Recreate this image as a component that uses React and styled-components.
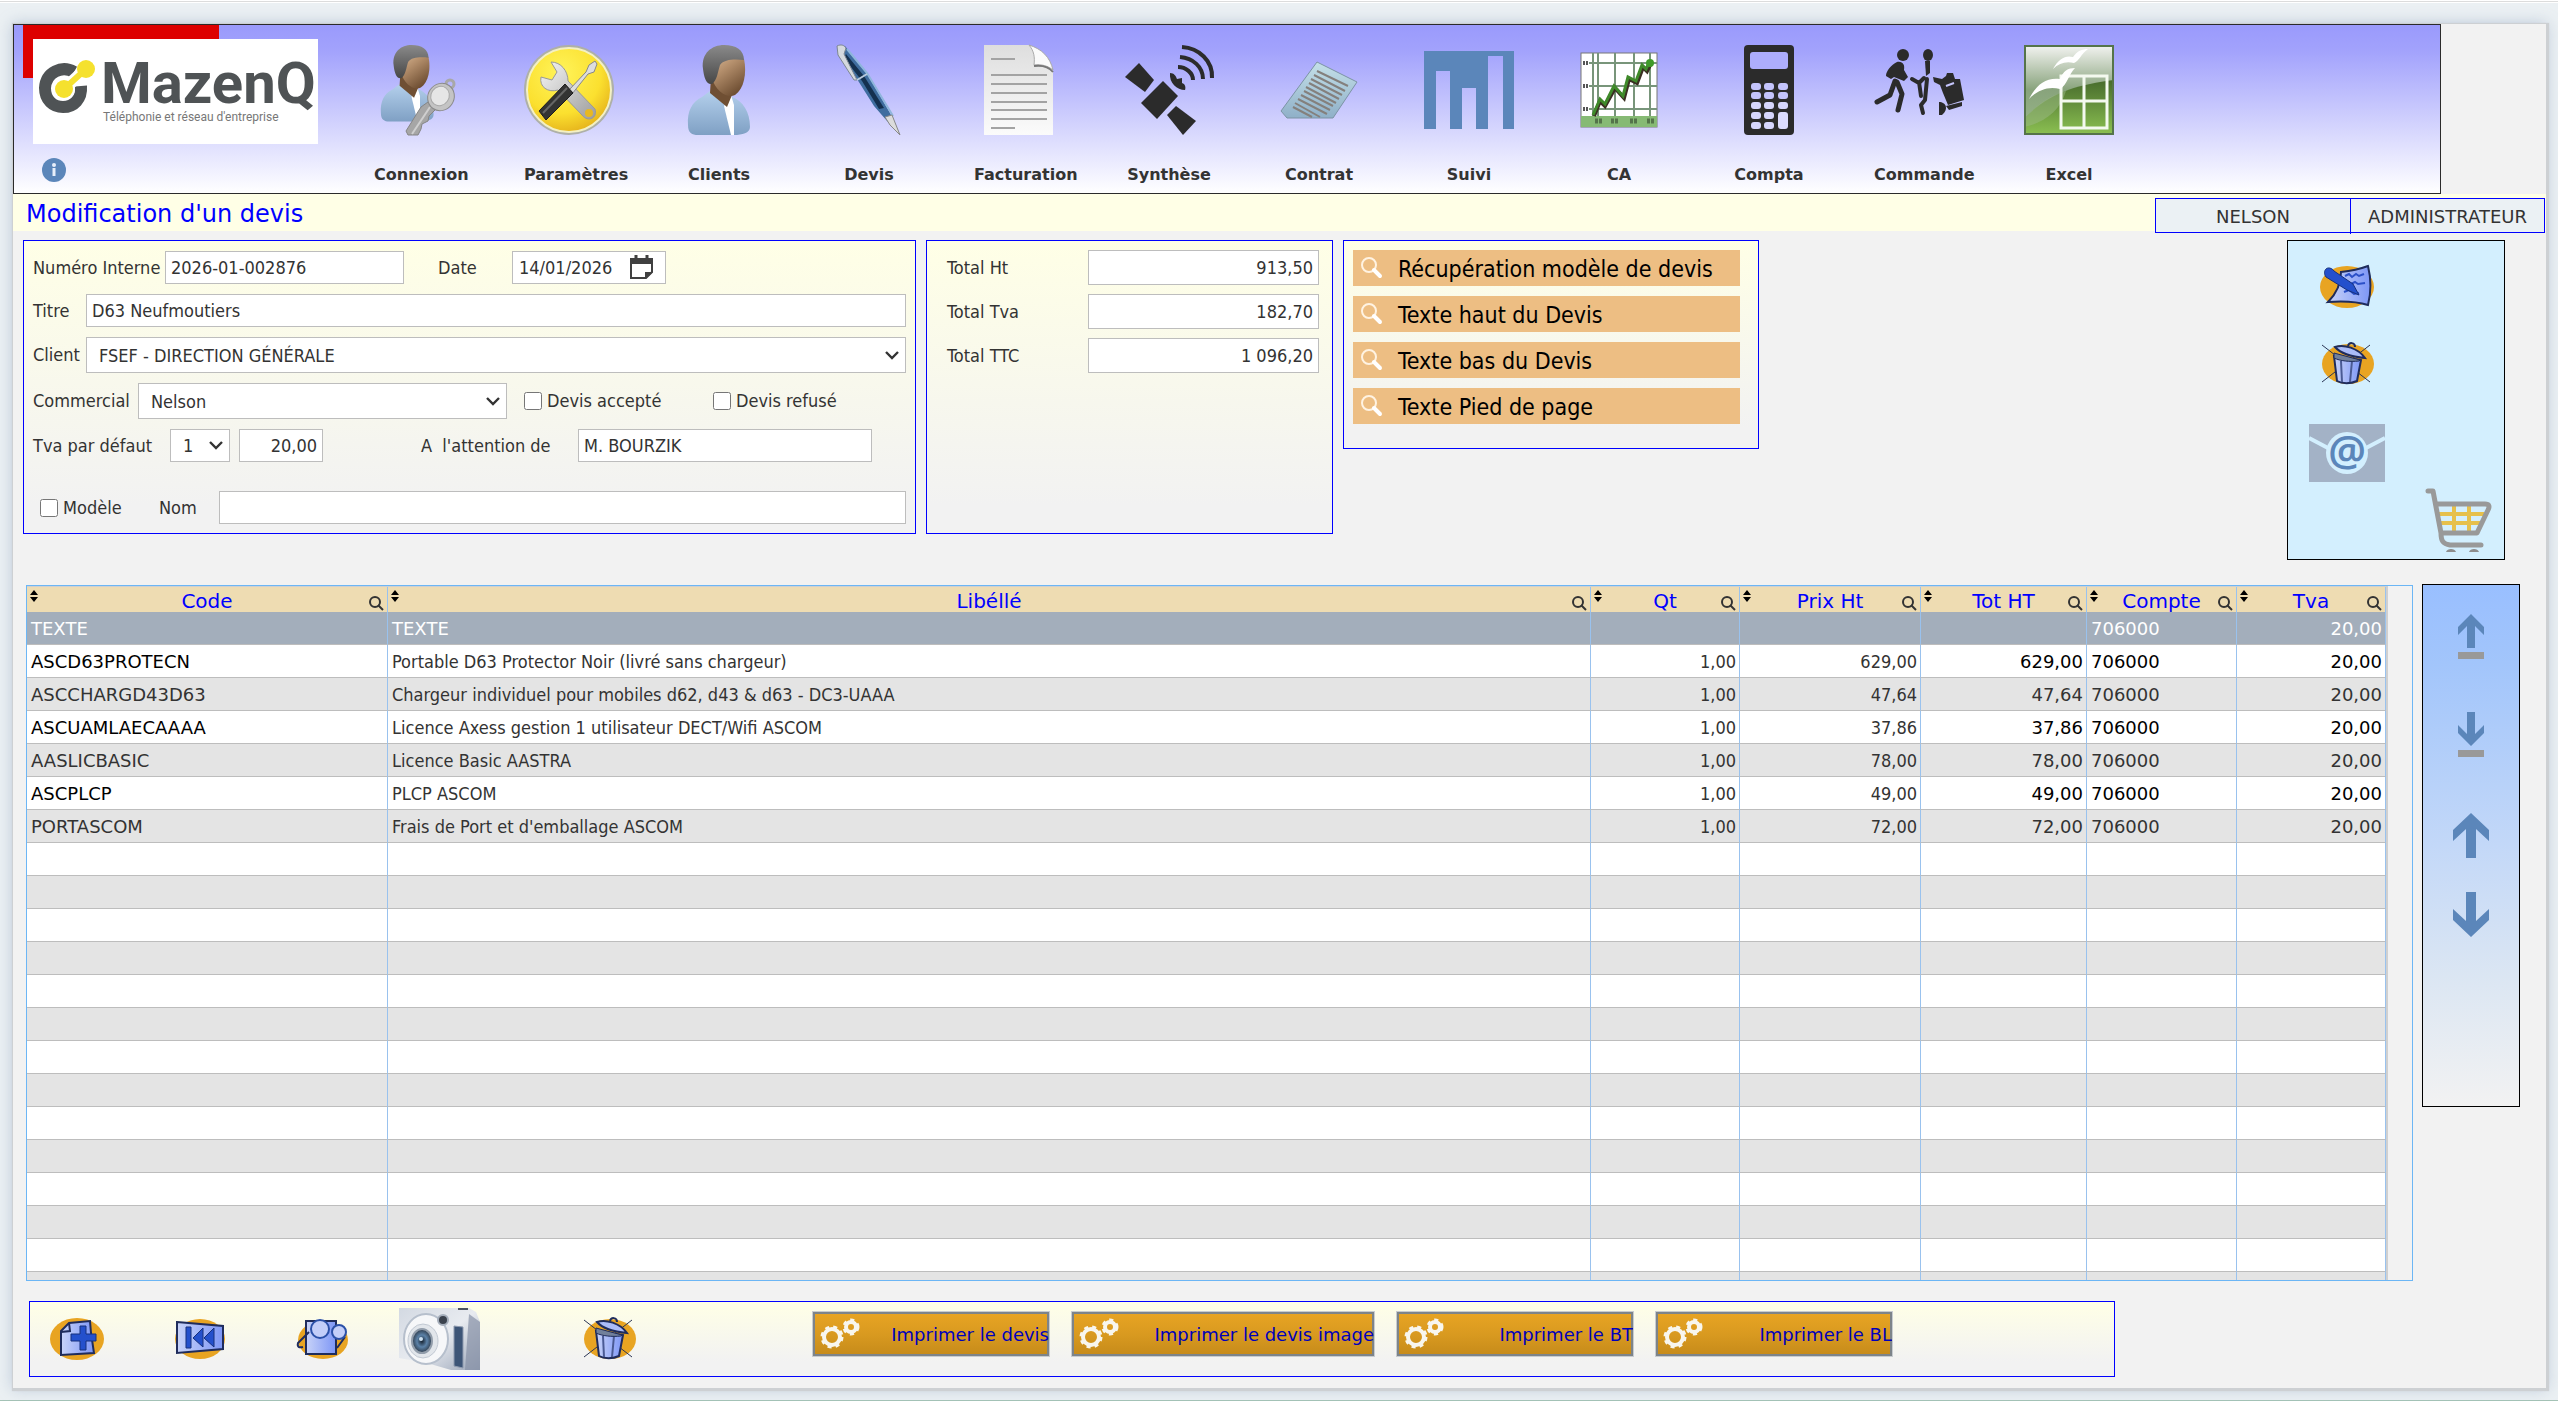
import React, { useState } from "react";
import styled, { createGlobalStyle, css } from "styled-components";

const verdana = `Verdana, "DejaVu Sans", sans-serif`;
const tahoma = `Tahoma, "DejaVu Sans Condensed", "Noto Sans", sans-serif`;

const GlobalStyle = createGlobalStyle`
  * {
    box-sizing: border-box;
  }
  body {
    margin: 0;
    font-family: ${tahoma};
    font-size: 18px;
    color: #333333;
    background-color: #ebf0f3;
  }
  button {
    font: inherit;
    color: inherit;
    padding: 0;
    border: none;
    background: none;
    cursor: pointer;
  }
  svg {
    display: block;
    overflow: visible;
  }
`;

const Page = styled.div`
  min-height: 100vh;
  display: flex;
  flex-direction: column;
  padding: 23px 12px 12px 13px;
  border-top: 1px solid #ffffff;
  border-bottom: 1px solid #a5c3b6;
  box-shadow: inset 0 1px #dcdcdc, inset 0 2px #ffffff;
`;

const Window = styled.main`
  flex: 1;
  display: flex;
  flex-direction: column;
  background-color: #f2f2f2;
  box-shadow: 1px 1px 1px 2px #cdd0d3, 0 0 14px 1px rgba(120, 145, 180, 0.4);
`;

const Header = styled.header`
  display: flex;
  height: 170px;
  margin-right: 105px;
  border: 1px solid #2b2b2b;
  background: linear-gradient(#9a9afc, #a2a2fc 15%, #ffffff);
`;

const Brand = styled.div`
  position: relative;
  width: 285px;
  margin: 14px 56px 0 19px;
  &::before {
    content: "";
    position: absolute;
    top: -14px;
    left: -10px;
    width: 196px;
    height: 53px;
    background-color: #dd0000;
  }
`;

const LogoBox = styled.div`
  position: relative;
  height: 105px;
  display: flex;
  padding: 12px 6px 0 6px;
  background-color: #ffffff;
`;

const LogoText = styled.div`
  margin-left: 4px;
  padding-top: 4px;
  color: #4f5355;
`;

const Wordmark = styled.div`
  margin-left: -2px;
  font-family: Roboto, sans-serif;
  font-size: 58px;
  font-weight: 700;
  line-height: 56px;
`;

const Tagline = styled.div`
  font-family: Roboto, sans-serif;
  font-size: 12px;
  line-height: 12px;
  color: #777777;
  white-space: nowrap;
`;

const InfoButton = styled.button`
  margin: 14px 0 0 9px;
  width: 24px;
  height: 24px;
`;

const Nav = styled.nav`
  display: flex;
  gap: 60px;
  padding-top: 20px;
`;

const NavButton = styled.button`
  width: 90px;
  display: flex;
  flex-direction: column;
  align-self: flex-start;
  gap: 30px;
  font-family: ${verdana};
  font-size: 16px;
  font-weight: bold;
  line-height: 20px;
  color: #333333;
  white-space: nowrap;
  span {
    min-width: 100%;
  }
`;

const TitleBar = styled.div`
  display: flex;
  justify-content: space-between;
  align-items: flex-start;
  height: 37px;
  padding: 4px 1px 0 13px;
  background-color: #ffffe6;
`;

const PageTitle = styled.h1`
  margin: 0;
  font-family: ${verdana};
  font-size: 24px;
  font-weight: normal;
  line-height: 32px;
  color: #0000ff;
`;

const UserBox = styled.div`
  display: grid;
  grid-template-columns: 194px 194px;
  height: 35px;
  border: 1px solid #0000ff;
  background-color: #ebf1f4;
  font-family: ${verdana};
  font-size: 18px;
  line-height: 35px;
  text-align: center;
  span + span {
    border-left: 1px solid #0000ff;
  }
`;

const Panels = styled.section`
  display: grid;
  grid-template-columns: 893fr 407fr 416fr 508fr 218px;
  gap: 10px;
  align-items: start;
  padding: 9px 41px 0 10px;
`;

const Panel = styled.div`
  border: 1px solid #0000ff;
  background: linear-gradient(#ffffe6, #f2f2f2 90%);
`;

const FormPanel = styled(Panel)`
  display: flex;
  flex-direction: column;
  gap: 10px;
  padding: 10px 9px 9px 9px;
`;

const Row = styled.div`
  display: flex;
  align-items: center;
  ${(props) => props.$spaced && "margin-top: 19px;"}
`;

const Label = styled.label`
  flex: none;
  width: ${(props) => props.$width}px;
  padding-left: ${(props) => props.$indent || 0}px;
  line-height: 24px;
  white-space: pre;
`;

const field = css`
  height: 33px;
  border: 1px solid #bdbdbd;
  border-radius: 0;
  background-color: #ffffff;
  font-family: inherit;
  font-size: 18px;
  color: #333333;
  min-width: 0;
  ${(props) => (props.$width ? `width: ${props.$width}px;` : "flex: 1;")}
`;

const TextField = styled.input`
  ${field}
  padding: 0 5px;
  text-align: ${(props) => (props.$right ? "right" : "left")};
`;

const chevron =
  "url(\"data:image/svg+xml,%3Csvg xmlns='http://www.w3.org/2000/svg' width='14' height='9'%3E%3Cpath d='M1 1L7 7L13 1' fill='none' stroke='%23333' stroke-width='2.4'/%3E%3C/svg%3E\")";

const Select = styled.select`
  ${field}
  height: 36px;
  padding: 0 24px 0 12px;
  appearance: none;
  background-image: ${chevron};
  background-repeat: no-repeat;
  background-position: right 6px center;
`;

const SmallSelect = styled(Select)`
  height: 33px;
`;

const DateField = styled.div`
  ${field}
  flex: none;
  display: flex;
  align-items: center;
  padding-right: 11px;
  input {
    min-width: 0;
    flex: 1;
    border: none;
    padding: 0 0 0 6px;
    font: inherit;
    color: inherit;
  }
`;

const CheckLabel = styled.label`
  display: flex;
  align-items: center;
  gap: 5px;
  width: ${(props) => props.$width}px;
  margin-left: ${(props) => props.$indent}px;
  line-height: 24px;
  white-space: nowrap;
  input {
    width: 18px;
    height: 18px;
    margin: 0;
  }
`;

const TotalsPanel = styled(Panel)`
  display: flex;
  flex-direction: column;
  gap: 9px;
  padding: 9px 13px 0 20px;
  height: 294px;
`;

const TotalRow = styled.div`
  display: flex;
  justify-content: space-between;
  align-items: center;
  input {
    height: 35px;
  }
`;

const TextsPanel = styled(Panel)`
  display: flex;
  flex-direction: column;
  gap: 10px;
  padding: 9px 18px 24px 9px;
`;

const TextButton = styled.button`
  display: flex;
  align-items: center;
  gap: 14px;
  height: 36px;
  padding: 2px 0 0 7px;
  background-color: #edbe83;
  font-size: 23px;
  color: #000000;
  white-space: nowrap;
`;

const ToolsPanel = styled.div`
  grid-column: 5;
  display: flex;
  flex-direction: column;
  align-items: flex-start;
  height: 320px;
  padding: 24px 12px 8px 21px;
  border: 1px solid #000000;
  background-color: #d3effe;
`;

const ToolButton = styled.button`
  width: 76px;
  display: flex;
  justify-content: center;
  margin-bottom: ${(props) => props.$after || 0}px;
`;

const CartButton = styled.button`
  align-self: flex-end;
`;

const Content = styled.section`
  flex: 1;
  display: flex;
  align-items: flex-start;
  gap: 9px;
  padding: 24px 26px 0 13px;
`;

const TableFrame = styled.div`
  flex: 1;
  min-width: 0;
  height: calc(100vh - 705px);
  margin-top: 1px;
  padding-right: 24px;
  overflow: hidden;
  border: 1px solid #6cb6f5;
`;

const Table = styled.table`
  width: 100%;
  table-layout: fixed;
  border-collapse: separate;
  border-spacing: 0;
  font-family: ${verdana};
  border-top: 1px solid #d0d0d0;
  border-right: 2px solid #d0d0d0;
`;

const HeadCell = styled.th`
  height: 25px;
  padding: 0;
  border-right: 1px solid #99c2ee;
  background-color: #eedcb2;
  font-size: 20px;
  font-weight: normal;
  line-height: 25px;
  color: #0000ff;
`;

const HeadInner = styled.div`
  display: flex;
  justify-content: space-between;
  height: 25px;
  padding: 3px 3px 0 3px;
  line-height: 22px;
  svg:last-child {
    margin-top: 6px;
  }
`;

const BodyRow = styled.tr`
  height: 33px;
  color: ${(props) => (props.$even ? "#333333" : "#000000")};
  background-color: ${(props) => (props.$even ? "#e4e4e4" : "#ffffff")};
  ${(props) =>
    props.$selected &&
    css`
      color: #ffffff;
      background-color: #a3aebb;
    `}
`;

const Cell = styled.td`
  height: 33px;
  padding: 1px 3px 0 4px;
  border-right: 1px solid #99c2ee;
  border-bottom: 1px solid #bdbdbd;
  line-height: 31px;
  white-space: nowrap;
  overflow: hidden;
  text-align: ${(props) => (props.$right ? "right" : "left")};
  ${(props) => props.$soft && `font-family: ${tahoma}; color: #333333;`}
`;

const SidePanel = styled.aside`
  width: 98px;
  height: 523px;
  display: flex;
  flex-direction: column;
  align-items: center;
  padding-top: 29px;
  border: 1px solid #000000;
  background: linear-gradient(#99bfff, #a2c5fb 15%, #c3d8f8 50%, #dbe6f3 75%, #f2f2f2);
`;

const Footer = styled.footer`
  display: flex;
  align-items: center;
  height: 76px;
  width: 2086px;
  max-width: calc(100% - 32px);
  margin: 19px 0 11px 16px;
  border: 1px solid #0000ff;
  background: linear-gradient(#ffffe6, #f2f2f2 80%);
`;

const FooterIcons = styled.div`
  display: flex;
  align-items: center;
  padding-left: 19px;
  width: 782px;
`;

const FooterButton = styled.button`
  margin-right: ${(props) => props.$after || 0}px;
`;

const PrintButtons = styled.div`
  display: flex;
  align-self: flex-start;
  gap: 21px;
  padding-top: 9px;
`;

const PrintButton = styled.button`
  width: ${(props) => (props.$wide ? 304 : 238)}px;
  height: 46px;
  display: flex;
  align-items: center;
  justify-content: space-between;
  padding-left: 6px;
  border: 1px solid #c8ccd0;
  overflow: hidden;
  background-color: #7d8489;
  background-image: linear-gradient(#e8a523, #d99a20 50%, #c58a1a);
  box-shadow: inset 0 0 0 2px #7d8489;
  font-family: ${verdana};
  font-size: 18px;
  color: #0000bb;
  white-space: nowrap;
`;

/* toolbar drawings, all on a 90 x 90 grid */

const Icon90 = ({ children }) => (
  <svg width="90" height="90" viewBox="0 0 90 90" aria-hidden="true">
    {children}
  </svg>
);

const HiddenSvg = styled.svg`
  position: absolute;
`;

const Defs = () => (
  <HiddenSvg width="0" height="0" aria-hidden="true">
    <defs>
      <linearGradient id="skin" x1="0" y1="0" x2="0.6" y2="1">
        <stop offset="0" stopColor="#d9b896" />
        <stop offset="0.4" stopColor="#b48f6c" />
        <stop offset="1" stopColor="#6f4f33" />
      </linearGradient>
      <linearGradient id="hair" x1="0" y1="0" x2="0" y2="1">
        <stop offset="0" stopColor="#8a8a8a" />
        <stop offset="1" stopColor="#474747" />
      </linearGradient>
      <linearGradient id="shirt" x1="0" y1="0" x2="0" y2="1">
        <stop offset="0" stopColor="#b4d0ec" />
        <stop offset="1" stopColor="#7fa0c4" />
      </linearGradient>
      <linearGradient id="steel" x1="0" y1="0" x2="1" y2="1">
        <stop offset="0" stopColor="#f6f6f6" />
        <stop offset="1" stopColor="#9c9c9c" />
      </linearGradient>
      <radialGradient id="gold" cx="0.4" cy="0.3" r="0.8">
        <stop offset="0" stopColor="#fff45a" />
        <stop offset="0.6" stopColor="#fbe02f" />
        <stop offset="1" stopColor="#dfa616" />
      </radialGradient>
      <linearGradient id="sheet" x1="0" y1="0" x2="0" y2="1">
        <stop offset="0" stopColor="#dedede" />
        <stop offset="1" stopColor="#fbfbfb" />
      </linearGradient>
      <linearGradient id="contract" x1="0" y1="0" x2="0" y2="1">
        <stop offset="0" stopColor="#c4e0e8" />
        <stop offset="1" stopColor="#8fb0c8" />
      </linearGradient>
      <linearGradient id="excel" x1="0" y1="0" x2="0" y2="1">
        <stop offset="0" stopColor="#f4f4f2" />
        <stop offset="0.5" stopColor="#88a37c" />
        <stop offset="1" stopColor="#9bb98a" />
      </linearGradient>
      <linearGradient id="excelHill" x1="0" y1="0" x2="0" y2="1">
        <stop offset="0" stopColor="#476b2c" />
        <stop offset="1" stopColor="#8cc152" />
      </linearGradient>
      <linearGradient id="paper" x1="0" y1="0" x2="1" y2="0">
        <stop offset="0" stopColor="#c8d3f8" />
        <stop offset="1" stopColor="#7d96f6" />
      </linearGradient>
      <linearGradient id="camera" x1="0" y1="0" x2="1" y2="1">
        <stop offset="0" stopColor="#d3d9e2" />
        <stop offset="0.5" stopColor="#e8ebf0" />
        <stop offset="1" stopColor="#9aa5b8" />
      </linearGradient>
      <radialGradient id="lens">
        <stop offset="0" stopColor="#14202e" />
        <stop offset="0.5" stopColor="#5c82a8" />
        <stop offset="1" stopColor="#2d3a49" />
      </radialGradient>
    </defs>
  </HiddenSvg>
);

const Person = () => (
  <>
    <path d="M14 80C13 66 18 57 28 52L36 46H50L58 52C69 56 76 67 76 82C76 88 68 90 60 90H24C18 90 14 88 14 80Z" fill="url(#shirt)" />
    <path d="M50 61L57 50L60 60L60 90H57Z" fill="#ffffff" />
    <path d="M37 32L60 40L58 50L53 62L36 48Z" fill="#6f4f33" />
    <path d="M40 20C46 10 62 8 70 14C73 28 70 44 61 50C53 54 42 46 38 34Z" fill="url(#skin)" />
    <path d="M29 24C27 8 38 0 50 0C62 0 70 5 70 15C61 14 50 14 46 20C44 26 43 36 38 39C32 40 30 32 29 24Z" fill="url(#hair)" />
  </>
);

const ConnexionIcon = () => (
  <Icon90>
    <g transform="translate(-5 0) scale(0.85 0.85)">
      <Person />
    </g>
    <circle cx="76" cy="39" r="4" fill="none" stroke="#a8a8a8" strokeWidth="3" />
    <path d="M63 63L55 71L54 76L48 79L47 84L44 90H34L32 86L47 62L54 57Z" fill="#a6a6a6" stroke="#858585" />
    <path d="M56 62L38 89" stroke="#cfcfcf" strokeWidth="2" />
    <ellipse cx="67" cy="52" rx="13" ry="14" fill="#c4c4c4" stroke="#8a8a8a" transform="rotate(35 67 52)" />
    <ellipse cx="66" cy="51" rx="9" ry="10" fill="#e6e6e6" stroke="#a8a8a8" transform="rotate(35 66 51)" />
  </Icon90>
);

const SettingsIcon = () => (
  <Icon90>
    <circle cx="45" cy="45" r="45" fill="#aeb0a8" />
    <circle cx="45" cy="45" r="42" fill="url(#gold)" stroke="#f3f0c4" strokeWidth="2" />
    <path
      d="M27 17L33 27L28 35L17 32C15 42 24 48 34 45L58 70C64 78 74 73 71 64L44 36C44 26 37 17 27 17Z"
      fill="url(#steel)"
      stroke="#999999"
    />
    <ellipse cx="65" cy="68" rx="4" ry="4" fill="#e8b820" />
    <path d="M45 45L62 27L65 20L71 16L73 19L70 27L64 29L48 49Z" fill="#dddddd" stroke="#888888" />
    <path d="M15 66L41 39L49 48L22 75Z" fill="#333333" stroke="#1d1d1d" />
    <path d="M19 68L43 43" stroke="#666666" strokeWidth="2" />
  </Icon90>
);

const ClientsIcon = () => (
  <Icon90>
    <Person />
  </Icon90>
);

const PenIcon = () => (
  <Icon90>
    <path d="M14 1L21 1L44 30L66 68L74 85L76 90L70 84L50 61L33 34L14 10Z" fill="#3f6d9f" />
    <path d="M22 9L40 31L60 63L55 64L38 36L20 13Z" fill="#14304f" />
    <path d="M23 4L43 28L69 71" fill="none" stroke="#8fb6dc" strokeWidth="2" />
    <path d="M13 1C17 -1 20 0 22 3L20 9L33 35L30 35L14 10Z" fill="#d5d9de" stroke="#7d8792" />
    <path d="M61 72L68 70L76 90L66 80Z" fill="#dcdcdc" stroke="#888888" />
    <path d="M33 35L43 29" stroke="#b7c9dc" strokeWidth="2" />
  </Icon90>
);

const InvoiceIcon = () => (
  <Icon90>
    <path d="M10 0H55C66 4 74 12 79 25V90H10Z" fill="url(#sheet)" />
    <path d="M55 0C60 6 61 12 60 20C68 19 74 21 79 25C76 12 68 4 55 0Z" fill="#fafafa" stroke="#aaaaaa" />
    <path d="M60 21C68 20 75 22 79 27" fill="none" stroke="#777777" strokeWidth="2" />
    <path d="M17 14H41M17 30H73M17 39H73M17 48H73M17 57H73M17 65H73M17 74H73M17 83H41" stroke="#a3a3a3" strokeWidth="2" />
  </Icon90>
);

const SatelliteIcon = () => (
  <Icon90>
    <g fill="#2b2b2b">
      <path d="M15 18L30 35L21 47L1 32Z" />
      <path d="M39 36L54 51L33 74L17 58Z" />
      <path d="M52 61L72 76L59 90L43 70Z" />
      <path d="M46 28C50 28 52 31 53 34L58 33L58 38C61 39 62 42 61 45C53 45 45 38 46 28Z" />
    </g>
    <g fill="none" stroke="#2b2b2b" strokeWidth="4">
      <path d="M58 2C75 3 89 16 88 33" />
      <path d="M56 12C69 13 79 22 79 34" />
      <path d="M54 22C62 22 69 28 69 35" />
    </g>
  </Icon90>
);

const ContractIcon = () => (
  <Icon90>
    <path d="M43 17L83 37L59 73H13L7 66Z" fill="url(#contract)" stroke="#7c93a5" />
    <path
      d="M43 26L74 41M40 30L71 46M37 34L68 50M35 38L65 54M32 42L62 58M30 46L59 61M27 50L56 65M24 54L53 69M21 58L46 72M19 62L38 72"
      stroke="#84807d"
      strokeWidth="2"
    />
  </Icon90>
);

const FollowIcon = () => (
  <Icon90>
    <path d="M0 6H90V84H79V11H64V84H52V43H38V84H26V26H12V84H0Z" fill="#5b86ba" />
  </Icon90>
);

const ChartIcon = () => (
  <Icon90>
    <rect x="7" y="8" width="76" height="74" fill="#ffffff" stroke="#777777" />
    <rect x="7" y="71" width="76" height="11" fill="#86ba74" />
    <path d="M19 8V71M24 8V71M41 8V71M60 8V71M76 8V71M15 18H83M15 41H83M15 64H83" stroke="#78957a" strokeWidth="2" />
    <path d="M9 18H15M9 41H15M9 64H15" stroke="#555555" strokeWidth="4" strokeDasharray="2 1" />
    <path d="M21 76H28M37 76H45M56 76H63M73 76H80" stroke="#54744a" strokeWidth="5" strokeDasharray="3 1" />
    <path d="M20 71L26 56L31 61L41 43L50 53L55 34L63 38L69 22L73 26L77 18" fill="none" stroke="#3a2f22" strokeWidth="4" />
    <path d="M19 70L26 54L31 59L40 41L49 51L54 32L62 36L68 20L72 24L76 16" fill="none" stroke="#3f8a2a" strokeWidth="3" />
    <circle cx="76" cy="18" r="4" fill="#3f9a2a" />
  </Icon90>
);

const CalcIcon = () => (
  <Icon90>
    <rect x="20" y="0" width="50" height="90" rx="4" fill="#2b2b2b" />
    <rect x="26" y="7" width="38" height="17" rx="3" fill="#adadfc" />
    {[41, 50, 60, 70, 80].map((y) =>
      [32, 45, 59].map((x) =>
        x === 59 && y > 60 ? null : (
          <rect key={`${x}-${y}`} x={x - 5} y={y - 3} width="10" height="7" rx="3" fill={y > 55 ? "#d6d6fd" : "#c4c4fc"} />
        )
      )
    )}
    <rect x="54" y="67" width="10" height="17" rx="3" fill="#dcdcfe" />
  </Icon90>
);

const OrderIcon = () => (
  <Icon90>
    <g fill="#2b2b2b">
      <ellipse cx="29" cy="10" rx="6" ry="6" />
      <ellipse cx="54" cy="10" rx="5" ry="6" />
      <path d="M23 17C29 16 31 20 30 25L34 32L30 36L20 32L17 34L12 31C12 26 17 20 23 17Z" />
      <path d="M51 16H56L56 28L52 31Z" />
      <path d="M59 32L68 34L72 31L73 28L79 28L81 34L86 34L90 55L74 60L69 48L66 40L60 37Z" />
      <path d="M72 61L88 57L88 61L75 65Z" />
      <path d="M65 57C72 57 75 64 68 70L65 70Z" />
    </g>
    <g fill="none" stroke="#2b2b2b" strokeLinecap="round" strokeLinejoin="round" strokeWidth="5">
      <path d="M21 36L16 50L3 57" />
      <path d="M23 37L28 49L24 65" />
      <path d="M38 34L45 38L50 33M45 37L47 51" strokeWidth="4" />
      <path d="M53 34L51 55L47 60L49 68" strokeWidth="4" />
    </g>
    <path d="M72 41L80 38" stroke="#c5c5fc" strokeWidth="2" />
  </Icon90>
);

const ExcelIcon = () => (
  <Icon90>
    <rect width="90" height="90" fill="url(#excel)" />
    <path d="M0 74C24 48 52 40 90 35V90H0Z" fill="url(#excelHill)" />
    <path d="M0 74C14 58 28 50 42 46C36 66 20 78 0 82Z" fill="#9cb985" opacity="0.5" />
    <rect x="1" y="1" width="88" height="88" fill="none" stroke="#55744a" strokeWidth="2" />
    <path d="M37 31H83V83H37ZM60 31V83M37 56H83" fill="none" stroke="#f4f9ef" strokeWidth="3" />
    <path d="M29 24C35 13 42 10 49 12C53 6 58 4 64 4C57 9 55 16 50 18C42 16 35 18 29 24Z" fill="#ffffff" />
    <path d="M5 54C12 40 22 32 36 34C39 26 44 23 51 23C45 29 43 40 36 44C24 41 14 45 5 54Z" fill="#ffffff" />
  </Icon90>
);

/* small action drawings */

const Glass = () => (
  <svg width="24" height="24" viewBox="0 0 24 24" aria-hidden="true">
    <circle cx="9" cy="8" r="7" fill="none" stroke="#fff3e2" strokeWidth="2" />
    <path d="M14 13L20 19" stroke="#ffffff" strokeWidth="4" strokeLinecap="round" />
  </svg>
);

const CalendarIcon = () => (
  <svg width="25" height="25" viewBox="0 0 25 25" aria-hidden="true">
    <path d="M1 3H24V9H1Z" fill="#404040" />
    <path d="M2 8V23H17L23 17V8" fill="none" stroke="#404040" strokeWidth="2" />
    <path d="M16 24V17H24Z" fill="#404040" />
    <path d="M7 0V6M18 0V6" stroke="#404040" strokeWidth="3" />
  </svg>
);

const NoteIcon = () => (
  <svg width="56" height="44" viewBox="0 0 56 44" aria-hidden="true">
    <ellipse cx="28" cy="22" rx="27" ry="21" fill="#e8a422" />
    <path d="M22 7C32 6 41 4 49 1C52 13 52 28 49 40C36 36 22 36 9 37C18 28 22 18 22 7Z" fill="url(#paper)" stroke="#1f2c5c" strokeWidth="2" />
    <path d="M26 11L30 9L33 12L37 9L40 11L45 9M32 19L36 17L39 19L46 18M25 27L30 25L35 29L40 28" fill="none" stroke="#2b50c8" strokeWidth="2" />
    <path d="M7 4C9 2 13 3 15 6L34 19L40 30L28 25L7 12C5 9 5 6 7 4Z" fill="#2450cc" stroke="#16307c" />
  </svg>
);

const TrashIcon = () => (
  <svg width="54" height="44" viewBox="0 0 54 44" aria-hidden="true">
    <ellipse cx="28" cy="22" rx="26" ry="20" fill="#e8a422" />
    <path d="M2 3L50 40M50 3L2 40" stroke="#2b3554" strokeWidth="1" />
    <path d="M14 14L41 18L37 39C31 42 22 42 17 39Z" fill="url(#paper)" stroke="#1f2c5c" strokeWidth="2" />
    <path d="M21 19L22 40M32 19L30 40" stroke="#4a5a94" strokeWidth="2" />
    <path d="M14 11L40 18L39 19C30 20 20 19 14 16Z" fill="#71809b" stroke="#1f2c5c" />
    <path d="M15 5C24 2 38 6 45 16C34 15 22 13 15 5Z" fill="#abbcf8" stroke="#1f2c5c" strokeWidth="2" />
    <path d="M28 4C29 0 35 0 35 5" fill="none" stroke="#1f2c5c" strokeWidth="2" />
  </svg>
);

const MailIcon = () => (
  <svg width="76" height="58" viewBox="0 0 76 58" aria-hidden="true">
    <rect width="76" height="58" fill="#a3b2c6" />
    <path d="M0 14L38 34L76 14" fill="none" stroke="#d3effe" strokeWidth="4" />
    <circle cx="38" cy="29" r="21" fill="#d3effe" />
    <text x="38" y="42" textAnchor="middle" fontFamily="Noto Sans, sans-serif" fontSize="42" fontWeight="600" fill="#5b86ba">
      @
    </text>
  </svg>
);

const CartIcon = () => (
  <svg width="64" height="62" viewBox="0 0 64 62" aria-hidden="true">
    <path d="M26 16V42M41 16V42M10 24H56M11 33H52" stroke="#e6c04c" strokeWidth="4" />
    <path d="M0 1H5L13 43C13 51 15 54 22 55H53M8 14H57C61 14 62 16 60 20L49 43H13" fill="none" stroke="#999999" strokeWidth="5" strokeLinecap="round" strokeLinejoin="round" />
    <path d="M18 62C19 58 27 58 28 62ZM41 62C42 58 50 58 51 62Z" fill="#8d8d8d" />
  </svg>
);

const ArrowIcon = ({ down, bar }) => (
  <svg width={bar ? 28 : 36} height="45" viewBox={bar ? "0 0 28 45" : "0 0 36 45"} aria-hidden="true">
    {bar ? (
      <>
        <path
          d="M14 0L27 13V21L18 12V34H10V12L1 21V13Z"
          transform={down ? "rotate(180 14 17)" : undefined}
          fill="#5b86ba"
        />
        <rect x="1" y="38" width="26" height="7" fill="#999999" />
      </>
    ) : (
      <path
        d="M18 0L36 17V28L23 16V45H13V16L0 28V17Z"
        transform={down ? "rotate(180 18 22.5)" : undefined}
        fill="#5b86ba"
      />
    )}
  </svg>
);

const AddIcon = () => (
  <svg width="56" height="44" viewBox="0 0 56 44" aria-hidden="true">
    <ellipse cx="28" cy="22" rx="27" ry="21" fill="#e8a422" />
    <path d="M12 14L20 6L41 4L42 16L45 36L12 38Z" fill="url(#paper)" stroke="#1f2c5c" strokeWidth="2" />
    <path d="M12 15L21 14L20 6" fill="none" stroke="#1f2c5c" strokeWidth="2" />
    <path d="M31 9H37V17H47V24H37V33H31V24H22V17H31Z" fill="#2450cc" stroke="#16307c" />
  </svg>
);

const RewindIcon = () => (
  <svg width="52" height="44" viewBox="0 0 52 44" aria-hidden="true">
    <ellipse cx="26" cy="22" rx="25" ry="20" fill="#e8a422" />
    <path d="M3 5L49 9V32L3 36Z" fill="url(#paper)" stroke="#1f2c5c" strokeWidth="2" />
    <path d="M12 10H17V31H12ZM29 11V30L19 21ZM40 11V30L30 21Z" fill="#2450cc" stroke="#16307c" />
  </svg>
);

const SearchDocIcon = () => (
  <svg width="52" height="44" viewBox="0 0 52 44" aria-hidden="true">
    <ellipse cx="27" cy="23" rx="25" ry="19" fill="#e8a422" />
    <path d="M10 4H40V37H10Z" fill="url(#paper)" stroke="#1f2c5c" strokeWidth="2" />
    <path d="M13 15L2 26C1 30 3 31 7 30M49 20L41 31" fill="none" stroke="#1f2c5c" strokeWidth="2" />
    <circle cx="24" cy="12" r="9" fill="#c3cef9" stroke="#2b50a8" strokeWidth="2" />
    <circle cx="43" cy="15" r="7" fill="#c3cef9" stroke="#2b50a8" strokeWidth="2" />
  </svg>
);

const CameraIcon = () => (
  <svg width="81" height="62" viewBox="0 0 81 62" aria-hidden="true">
    <path d="M0 0H70L77 4L81 14V62H52L28 55L0 50Z" fill="url(#camera)" />
    <path d="M70 6L81 14V62H66Z" fill="#8792a6" opacity="0.7" />
    <path d="M59 0H69V2H59Z" fill="#4a5260" />
    <ellipse cx="27" cy="31" rx="22" ry="25" fill="#f6f7f9" stroke="#b6bfcc" strokeWidth="2" />
    <ellipse cx="24" cy="33" rx="15" ry="17" fill="#e2e6eb" stroke="#c2c9d3" />
    <ellipse cx="23" cy="33" rx="10" ry="12" fill="url(#lens)" stroke="#929dab" strokeWidth="2" />
    <circle cx="22" cy="31" r="2" fill="#cfe3f4" />
    <circle cx="44" cy="12" r="5" fill="#3b424d" stroke="#a5aebb" strokeWidth="2" />
    <path d="M55 18L64 19V60L55 58Z" fill="#3d5577" stroke="#8f9bb0" />
  </svg>
);

const GearIcon = ({ cx, cy, r }) => (
  <>
    <circle cx={cx} cy={cy} r={r + 2} fill="none" stroke="#f8f6ee" strokeWidth="3" strokeDasharray="4 4" />
    <circle cx={cx} cy={cy} r={r} fill="none" stroke="#f8f6ee" strokeWidth="4" />
  </>
);

const Gears = () => (
  <svg width="42" height="34" viewBox="0 0 42 34" aria-hidden="true">
    <GearIcon cx={13} cy={20} r={8} />
    <GearIcon cx={32} cy={10} r={5} />
  </svg>
);

const SortMark = () => (
  <svg width="15" height="12" viewBox="0 0 15 12" aria-hidden="true">
    <path d="M4 0L8 5H0ZM4 12L8 7H0Z" fill="#000000" />
  </svg>
);

const FindMark = () => (
  <svg width="15" height="15" viewBox="0 0 15 15" aria-hidden="true">
    <circle cx="6" cy="6" r="5" fill="none" stroke="#333333" strokeWidth="2" />
    <path d="M9 9L14 14" stroke="#333333" strokeWidth="2" />
  </svg>
);

const menu = [
  ["Connexion", ConnexionIcon],
  ["Paramètres", SettingsIcon],
  ["Clients", ClientsIcon],
  ["Devis", PenIcon],
  ["Facturation", InvoiceIcon],
  ["Synthèse", SatelliteIcon],
  ["Contrat", ContractIcon],
  ["Suivi", FollowIcon],
  ["CA", ChartIcon],
  ["Compta", CalcIcon],
  ["Commande", OrderIcon],
  ["Excel", ExcelIcon],
];

const totals = [
  ["Total Ht", "913,50"],
  ["Total Tva", "182,70"],
  ["Total TTC", "1 096,20"],
];

const texts = [
  "Récupération modèle de devis",
  "Texte haut du Devis",
  "Texte bas du Devis",
  "Texte Pied de page",
];

const columns = [
  { title: "Code", width: "361px" },
  { title: "Libéllé", width: "auto", soft: true },
  { title: "Qt", width: "149px", right: true, soft: true },
  { title: "Prix Ht", width: "181px", right: true, soft: true },
  { title: "Tot HT", width: "166px", right: true },
  { title: "Compte", width: "150px" },
  { title: "Tva", width: "149px", right: true },
];

const lines = [
  ["TEXTE", "TEXTE", "", "", "", "706000", "20,00"],
  ["ASCD63PROTECN", "Portable D63 Protector Noir (livré sans chargeur)", "1,00", "629,00", "629,00", "706000", "20,00"],
  ["ASCCHARGD43D63", "Chargeur individuel pour mobiles d62, d43 & d63 - DC3-UAAA", "1,00", "47,64", "47,64", "706000", "20,00"],
  ["ASCUAMLAECAAAA", "Licence Axess gestion 1 utilisateur DECT/Wifi ASCOM", "1,00", "37,86", "37,86", "706000", "20,00"],
  ["AASLICBASIC", "Licence Basic AASTRA", "1,00", "78,00", "78,00", "706000", "20,00"],
  ["ASCPLCP", "PLCP ASCOM", "1,00", "49,00", "49,00", "706000", "20,00"],
  ["PORTASCOM", "Frais de Port et d'emballage ASCOM", "1,00", "72,00", "72,00", "706000", "20,00"],
];

const ROW_COUNT = 21;
const rows = Array.from({ length: ROW_COUNT }, (_, i) => lines[i] || columns.map(() => ""));

const footerIcons = [
  ["Ajouter", AddIcon, 69],
  ["Retour", RewindIcon, 70],
  ["Rechercher", SearchDocIcon, 51],
  ["Photo", CameraIcon, 102],
  ["Supprimer la ligne", TrashIcon, 0],
];

const prints = [
  ["Imprimer le devis"],
  ["Imprimer le devis image", true],
  ["Imprimer le BT"],
  ["Imprimer le BL"],
];

const TopBar = () => (
  <Header>
    <Brand>
      <LogoBox>
        <svg width="60" height="68" viewBox="0 0 60 68" aria-hidden="true">
          <path d="M35 21C23 14 7 21 6 37C6 49 14 56 24 56C35 56 43 48 42 35" fill="none" stroke="#4f5355" strokeWidth="12" />
          <path d="M25 38L47 18" stroke="#ffffff" strokeWidth="12" />
          <circle cx="25" cy="38" r="11" fill="#ffffff" />
          <path d="M25 38L47 18" stroke="#f5e12e" strokeWidth="6" />
          <circle cx="47" cy="18" r="9" fill="#f5e12e" />
          <circle cx="25" cy="38" r="9" fill="#f5e12e" />
        </svg>
        <LogoText>
          <Wordmark>MazenQ</Wordmark>
          <Tagline>Téléphonie et réseau d'entreprise</Tagline>
        </LogoText>
      </LogoBox>
      <InfoButton aria-label="Informations">
        <svg width="24" height="24" viewBox="0 0 24 24">
          <circle cx="12" cy="12" r="12" fill="#5b86ba" />
          <path d="M12 10V18" stroke="#e8effa" strokeWidth="3" />
          <circle cx="12" cy="7" r="2" fill="#e8effa" />
        </svg>
      </InfoButton>
    </Brand>
    <Nav>
      {menu.map(([label, Icon]) => (
        <NavButton key={label}>
          <Icon />
          <span>{label}</span>
        </NavButton>
      ))}
    </Nav>
  </Header>
);

const QuoteForm = () => (
  <FormPanel as="form">
    <Row>
      <Label htmlFor="numero" $width={132}>Numéro Interne</Label>
      <TextField id="numero" $width={239} defaultValue="2026-01-002876" />
      <Label htmlFor="date" $width={108} $indent={34}>Date</Label>
      <DateField $width={154}>
        <input id="date" defaultValue="14/01/2026" />
        <button type="button" aria-label="Calendrier">
          <CalendarIcon />
        </button>
      </DateField>
    </Row>
    <Row>
      <Label htmlFor="titre" $width={53}>Titre</Label>
      <TextField id="titre" defaultValue="D63 Neufmoutiers" />
    </Row>
    <Row>
      <Label htmlFor="client" $width={53}>Client</Label>
      <Select id="client">
        <option>FSEF - DIRECTION GÉNÉRALE</option>
      </Select>
    </Row>
    <Row>
      <Label htmlFor="commercial" $width={105}>Commercial</Label>
      <Select id="commercial" $width={369}>
        <option>Nelson</option>
      </Select>
      <CheckLabel $indent={17} $width={171}>
        <input type="checkbox" />
        Devis accepté
      </CheckLabel>
      <CheckLabel $indent={18} $width={150}>
        <input type="checkbox" />
        Devis refusé
      </CheckLabel>
    </Row>
    <Row>
      <Label htmlFor="tva" $width={137}>Tva par défaut</Label>
      <SmallSelect id="tva" $width={60}>
        <option>1</option>
      </SmallSelect>
      <Label htmlFor="taux" $width={9} />
      <TextField id="taux" $width={84} $right defaultValue="20,00" aria-label="Taux" />
      <Label htmlFor="attention" $width={255} $indent={98}>{"A  l'attention de"}</Label>
      <TextField id="attention" $width={294} defaultValue="M. BOURZIK" />
    </Row>
    <Row $spaced>
      <CheckLabel $indent={7} $width={119}>
        <input type="checkbox" />
        Modèle
      </CheckLabel>
      <Label htmlFor="nom" $width={60}>Nom</Label>
      <TextField id="nom" defaultValue="" />
    </Row>
  </FormPanel>
);

const QuoteLines = () => {
  const [selected, setSelected] = useState(0);
  return (
    <TableFrame>
      <Table>
        <colgroup>
          {columns.map((col) => (
            <col key={col.title} style={{ width: col.width }} />
          ))}
        </colgroup>
        <thead>
          <tr>
            {columns.map((col) => (
              <HeadCell key={col.title}>
                <HeadInner>
                  <SortMark />
                  <span>{col.title}</span>
                  <FindMark />
                </HeadInner>
              </HeadCell>
            ))}
          </tr>
        </thead>
        <tbody>
          {rows.map((row, i) => (
            <BodyRow key={i} $even={i % 2 === 0} $selected={i === selected} onClick={() => setSelected(i)}>
              {row.map((value, j) => (
                <Cell key={j} $right={columns[j].right} $soft={columns[j].soft && i !== selected}>
                  {value}
                </Cell>
              ))}
            </BodyRow>
          ))}
        </tbody>
      </Table>
    </TableFrame>
  );
};

const App = () => (
  <>
    <GlobalStyle />
    <Defs />
    <Page>
      <Window>
        <TopBar />
        <TitleBar>
          <PageTitle>Modification d'un devis</PageTitle>
          <UserBox>
            <span>NELSON</span>
            <span>ADMINISTRATEUR</span>
          </UserBox>
        </TitleBar>
        <Panels>
          <QuoteForm />
          <TotalsPanel>
            {totals.map(([label, value]) => (
              <TotalRow key={label}>
                <label htmlFor={label}>{label}</label>
                <TextField id={label} $width={231} $right defaultValue={value} />
              </TotalRow>
            ))}
          </TotalsPanel>
          <TextsPanel>
            {texts.map((text) => (
              <TextButton key={text}>
                <Glass />
                {text}
              </TextButton>
            ))}
          </TextsPanel>
          <ToolsPanel>
            <ToolButton aria-label="Modifier" $after={33}><NoteIcon /></ToolButton>
            <ToolButton aria-label="Supprimer" $after={38}><TrashIcon /></ToolButton>
            <ToolButton aria-label="Envoyer" $after={8}><MailIcon /></ToolButton>
            <CartButton aria-label="Panier"><CartIcon /></CartButton>
          </ToolsPanel>
        </Panels>
        <Content>
          <QuoteLines />
          <SidePanel>
            <ToolButton aria-label="Premier" $after={53}><ArrowIcon bar /></ToolButton>
            <ToolButton aria-label="Dernier" $after={56}><ArrowIcon bar down /></ToolButton>
            <ToolButton aria-label="Monter" $after={34}><ArrowIcon /></ToolButton>
            <ToolButton aria-label="Descendre"><ArrowIcon down /></ToolButton>
          </SidePanel>
        </Content>
        <Footer>
          <FooterIcons>
            {footerIcons.map(([label, Icon, after]) => (
              <FooterButton key={label} aria-label={label} $after={after}>
                <Icon />
              </FooterButton>
            ))}
          </FooterIcons>
          <PrintButtons>
            {prints.map(([label, wide]) => (
              <PrintButton key={label} $wide={wide}>
                <Gears />
                {label}
              </PrintButton>
            ))}
          </PrintButtons>
        </Footer>
      </Window>
    </Page>
  </>
);

export default App;
